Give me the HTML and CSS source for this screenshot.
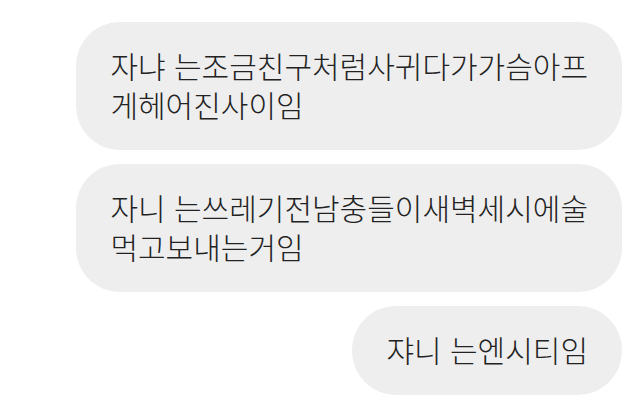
FILE: index.html
```html
<!DOCTYPE html>
<html lang="ko">
<head>
    <meta charset="UTF-8">
    <meta name="viewport" content="width=device-width, initial-scale=1.0">
    <title>채팅</title>
    <link rel="stylesheet" href="styles.css">
</head>
<body>
    <div class="chat">
        <div class="bubble">자냐 는조금친구처럼사귀다가가슴아프<br>게헤어진사이임</div>
        <div class="bubble">자니 는쓰레기전남충들이새벽세시에술<br>먹고보내는거임</div>
        <div class="bubble">쟈니 는엔시티임</div>
    </div>
</body>
</html>
```

FILE: styles.css
```css
* {
    margin: 0;
    padding: 0;
    box-sizing: border-box;
}

body {
    font-family: "Noto Sans CJK KR", "Noto Sans", sans-serif;
    background: #ffffff;
    color: #222222;
}

.chat {
    display: flex;
    flex-direction: column;
    align-items: flex-end;
    gap: 14px;
    padding: 22px 3px 0 0;
}

.bubble {
    background: #eeeeee;
    border-radius: 44px;
    padding: 24px 34px 26px;
    font-size: 30px;
    font-weight: 300;
    line-height: 39px;
    max-width: 560px;
    white-space: nowrap;
}
```
